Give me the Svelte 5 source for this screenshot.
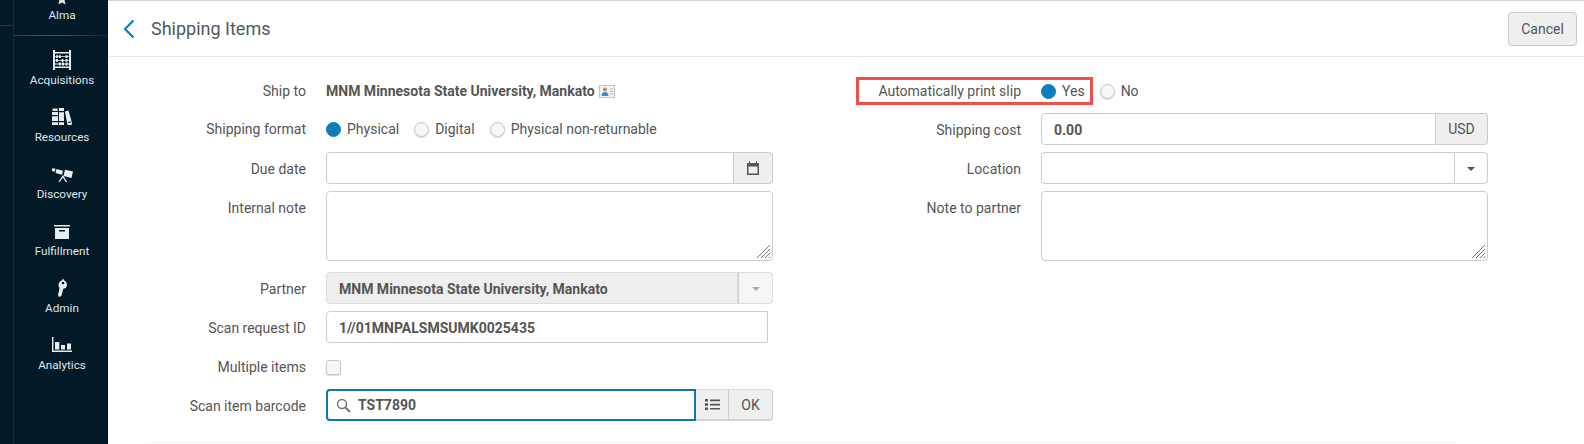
<script lang="ts">
  const navItems = [
    { label: 'Acquisitions', icon: 'abacus' },
    { label: 'Resources', icon: 'books' },
    { label: 'Discovery', icon: 'scope' },
    { label: 'Fulfillment', icon: 'box' },
    { label: 'Admin', icon: 'key' },
    { label: 'Analytics', icon: 'chart' }
  ];
</script>

<div class="page">
  <aside class="sidebar">
    <div class="rail"><span class="rail-tick"></span></div>
    <nav class="nav">
      <div class="alma">
        <svg class="star" width="12" height="6" viewBox="0 0 12 6"><path d="M3.500 0h5L9.600 4.600 6 2.600 2.400 4.600z" fill="#dfe6ea" /></svg>
        <span>Alma</span>
      </div>
      <div class="nav-sep"></div>
      {#each navItems as item (item.label)}
        <div class="nav-item">
          <svg width="24" height="22" viewBox="0 0 24 22" fill="#e8edf0">
            {#if item.icon === 'abacus'}
              <path d="M3 1h2v20H3zM19 1h2v20h-2zM5 3h14v1.500H5zM5 17.500h14V19H5z" />
              <path d="M5 7.300h14v.8H5zM5 11h14v.8H5zM5 14.600h14v.8H5z" />
              <path d="M6 6.300h2v2.800H6zM8.800 6.300h2v2.800h-2zM15.500 6.300h2v2.800h-2zM6 10h2v2.800H6zM11.500 10h2v2.800h-2zM15.500 10h2v2.800h-2zM8.800 13.600h2v2.800h-2zM12 13.600h2v2.800h-2zM15.500 13.600h2v2.800h-2z" />
            {:else if item.icon === 'books'}
              <path d="M2 6h6v13H2zM2.500 2.500h5V5h-5zM9 2h5v17H9z" />
              <path d="m15 5.500 3.500-1L22 17l-.5 2h-4z" />
              <path d="M2 9h6v1.200H2zM2 15h6v1.200H2zM9 5h5v1.200H9zM9 15h5v1.200H9zM18 16l3-.8.300 1-3 .8z" fill="#021a28" />
            {:else if item.icon === 'scope'}
              <path d="m2.500 5 3 .8-.8 3-3-.8zM6.500 6l6.500 1.700-1 4L5.500 10zM15 6.800l8 1.700-1.500 6.500-8-2z" />
              <path d="M12.500 12.500 8.500 19h1.300l3-4.500 3 4.500h1.400l-4-6.500z" />
            {:else if item.icon === 'box'}
              <path d="M4 5h16v1.600H4zM5 8h14v10.500a.5.5 0 0 1-.5.500h-13a.5.5 0 0 1-.5-.5z" />
              <path d="M9 10h6v1.500H9z" fill="#021a28" />
            {:else if item.icon === 'key'}
              <path d="M13 1.500 14 3.200A5 5 0 0 1 15.800 11L13.300 11.800 11.300 19 9 20 8 18 9.500 11A5 5 0 0 1 12 3.200z" />
              <circle cx="13" cy="6" r="1.300" fill="#021a28" />
            {:else}
              <path d="M2 3h1.400v13.600H22V18H2z" />
              <path d="M5 8h4.300v7.500H5zM11 11h4v4.500h-4zM17 9.500h4v6h-4z" />
            {/if}
          </svg>
          <span>{item.label}</span>
        </div>
      {/each}
    </nav>
  </aside>

  <main class="main">
    <header class="header">
      <svg class="back" width="14" height="20" viewBox="0 0 14 20"><path d="M11.500 1.500 3 10l8.500 8.500" fill="none" stroke="#0f7dbd" stroke-width="2.200" /></svg>
      <h1>Shipping Items</h1>
      <button class="cancel">Cancel</button>
    </header>

    <div class="form">
      <section class="col col-left">
        <div class="row short first">
          <span class="label">Ship to</span>
          <div class="value">
            <strong>MNM Minnesota State University, Mankato</strong>
            <svg class="card" width="16" height="13" viewBox="0 0 16 13">
              <rect x=".5" y=".5" width="15" height="12" fill="#f3f3f3" stroke="#c4c4c4" />
              <circle cx="6" cy="4.500" r="2" fill="#b08a6a" />
              <path d="M2.500 11c0-3 1.500-4 3.500-4s3.500 1 3.500 4z" fill="#3d8ccc" />
              <path d="M11 4h3M11 6.500h3M11 9h3" stroke="#b5b5b5" />
            </svg>
          </div>
        </div>
        <div class="row short">
          <span class="label">Shipping format</span>
          <div class="radios">
            <label class="radio"><span class="dot on"></span>Physical</label>
            <label class="radio"><span class="dot"></span>Digital</label>
            <label class="radio"><span class="dot"></span>Physical non-returnable</label>
          </div>
        </div>
        <div class="row">
          <span class="label">Due date</span>
          <div class="group">
            <div class="field"></div>
            <div class="addon cal">
              <svg width="14" height="14" viewBox="0 0 14 14" fill="#555"><path d="M1 2h2V0h1v2h6V0h1v2h2v12H1zM2.500 5.500v7h9v-7z" /></svg>
            </div>
          </div>
        </div>
        <div class="row top note">
          <span class="label">Internal note</span>
          <div class="area">
            <svg class="grip" width="15" height="15" viewBox="0 0 15 15"><path d="M1 14 14 1M5 14l9-9M9 14l5-5M12.500 14l1.500-1.500" stroke="#777" stroke-width="1" /></svg>
          </div>
        </div>
        <div class="row">
          <span class="label">Partner</span>
          <div class="group disabled">
            <div class="field bold">MNM Minnesota State University, Mankato</div>
            <div class="addon caret-box"><span class="caret light"></span></div>
          </div>
        </div>
        <div class="row">
          <span class="label">Scan request ID</span>
          <div class="field bold solo">1//01MNPALSMSUMK0025435</div>
        </div>
        <div class="row short first">
          <span class="label">Multiple items</span>
          <span class="check"></span>
        </div>
        <div class="row">
          <span class="label">Scan item barcode</span>
          <div class="group scan">
            <div class="field bold focus">
              <svg width="15" height="15" viewBox="0 0 15 15" fill="none" stroke="#777"><circle cx="6" cy="6" r="4.500" stroke-width="1.500" /><path d="m9.500 9.500 4.500 4.500" stroke-width="2.200" /></svg>
              TST7890
            </div>
            <div class="addon btn list">
              <svg width="15" height="11" viewBox="0 0 15 11" fill="#555"><path d="M0 0h3v2.500H0zM5 .5h10v1.700H5zM0 4.200h3v2.500H0zM5 4.700h10v1.700H5zM0 8.400h3v2.500H0zM5 8.900h10v1.700H5z" /></svg>
            </div>
            <div class="addon btn ok">OK</div>
          </div>
        </div>
      </section>

      <section class="col col-right">
        <div class="row short first">
          <span class="label">Automatically print slip</span>
          <div class="radios narrow">
            <label class="radio"><span class="dot on"></span>Yes</label>
            <label class="radio"><span class="dot"></span>No</label>
          </div>
          <span class="callout"></span>
        </div>
        <div class="row">
          <span class="label">Shipping cost</span>
          <div class="group">
            <div class="field bold">0.00</div>
            <div class="addon usd">USD</div>
          </div>
        </div>
        <div class="row">
          <span class="label">Location</span>
          <div class="group">
            <div class="field"></div>
            <div class="addon caret-box plain"><span class="caret"></span></div>
          </div>
        </div>
        <div class="row top note">
          <span class="label">Note to partner</span>
          <div class="area">
            <svg class="grip" width="15" height="15" viewBox="0 0 15 15"><path d="M1 14 14 1M5 14l9-9M9 14l5-5M12.500 14l1.500-1.500" stroke="#777" stroke-width="1" /></svg>
          </div>
        </div>
      </section>
    </div>
    <div class="foot-line"></div>
  </main>
</div>

<style>
  :global(body) {
    margin: 0;
    background: #fff;
    font-family: Roboto, "Liberation Sans", sans-serif;
    font-size: 14px;
    color: #555;
  }

  .page {
    display: flex;
    height: 444px;
    overflow: hidden;
  }

  .sidebar {
    display: flex;
    width: 108px;
    flex: none;
    background: #021a28;
  }

  .rail {
    width: 13px;
    flex: none;
    border-right: 1px solid #10303f;
    padding-top: 25px;
  }

  .rail-tick {
    display: block;
    height: 1px;
    background: #1c3a49;
  }

  .nav {
    flex: 1;
    color: #dfe6ea;
    font-size: 11.7px;
    line-height: 14px;
    text-align: center;
  }

  .alma {
    display: flex;
    flex-direction: column;
    align-items: center;
    height: 35px;
    gap: 2px;
    padding-left: 2px;
    box-sizing: border-box;
  }

  .nav-sep {
    height: 1px;
    margin-bottom: 13px;
    background: linear-gradient(90deg, #2b4653, #3e5965 50%, #0a2431);
  }

  .nav-item {
    display: flex;
    flex-direction: column;
    align-items: center;
    gap: 2px;
    height: 57px;
    padding-left: 2px;
    box-sizing: border-box;
  }

  .main {
    flex: 1;
    min-width: 0;
    border-top: 1px solid #d4d4d4;
  }

  .header {
    display: flex;
    align-items: center;
    height: 55px;
    border-bottom: 1px solid #e4e4e4;
    padding: 0 7px 0 14px;
  }

  .back {
    margin-right: 15px;
  }

  h1 {
    flex: 1;
    margin: 0;
    font-size: 18px;
    font-weight: 400;
    color: #505a62;
  }

  .cancel {
    width: 69px;
    height: 34px;
    border: 1px solid #c8c8c8;
    border-radius: 4px;
    background: #efefef;
    color: #555;
    font: 14px Roboto, sans-serif;
    padding: 0;
  }

  .form {
    display: flex;
    padding-top: 17px;
  }

  .col {
    flex: none;
  }

  .col-left {
    width: 665px;
    --label: 198px;
  }

  .col-right {
    width: 662px;
    margin-left: 70px;
    --label: 178px;
  }

  .row {
    position: relative;
    display: flex;
    align-items: center;
    gap: 20px;
    height: 32px;
    margin-bottom: 7px;
    box-sizing: border-box;
  }

  .row.first {
    padding-top: 2px;
  }

  .row.top {
    align-items: flex-start;
  }

  .row.note {
    height: 70px;
    margin-bottom: 11px;
  }

  .row.note .label {
    padding-top: 9px;
  }

  .row:not(.short):not(.note) .label {
    padding-top: 2px;
  }

  .label {
    width: var(--label);
    flex: none;
    text-align: right;
    line-height: 16px;
  }

  .value {
    display: flex;
    align-items: center;
    gap: 4px;
  }

  .value strong {
    font-weight: 700;
    color: #555;
    font-size: 14px;
  }

  .radios {
    display: flex;
    gap: 15px;
  }

  .radio {
    display: flex;
    align-items: center;
    gap: 6px;
  }

  .dot {
    width: 15px;
    height: 15px;
    border-radius: 50%;
    border: 1px solid #c6c6c6;
    background: #f7f7f7;
    box-shadow: 0 1px 1px #ddd;
    box-sizing: border-box;
  }

  .dot.on {
    border-color: #0f7dbd;
    background: #0f7dbd;
    box-shadow: none;
  }

  .group {
    display: flex;
    width: 447px;
    height: 32px;
    box-sizing: border-box;
  }

  .field {
    flex: 1;
    display: flex;
    align-items: center;
    gap: 7px;
    min-width: 0;
    height: 32px;
    box-sizing: border-box;
    padding: 0 12px;
    border: 1px solid #ccc;
    border-radius: 4px 0 0 4px;
    background: #fff;
  }

  .bold {
    font-weight: 700;
    color: #555;
    padding-top: 1px;
  }

  .addon {
    display: flex;
    align-items: center;
    justify-content: center;
    flex: none;
    box-sizing: border-box;
    height: 32px;
    border: 1px solid #ccc;
    border-left: 0;
    background: #efefef;
    border-radius: 0 4px 4px 0;
  }

  .cal {
    width: 39px;
  }

  .usd {
    width: 52px;
  }

  .caret-box {
    width: 33px;
  }

  .disabled .caret-box {
    width: 35px;
  }

  .caret-box.plain {
    background: #fff;
  }

  .caret {
    width: 0;
    height: 0;
    margin-top: 2px;
    border: 4px solid transparent;
    border-top-color: #555;
    border-bottom: 0;
  }

  .caret.light {
    border-top-color: #aaa;
  }

  .disabled .field {
    background: #eee;
    border-color: #ddd;
  }

  .disabled .addon {
    background: #f6f6f6;
    border-color: #ddd;
    border-left: 1px solid #ccc;
  }

  .solo {
    flex: none;
    width: 442px;
    border-radius: 4px 0 0 4px;
  }

  .check {
    width: 15px;
    height: 15px;
    border: 1px solid #c6c6c6;
    border-radius: 3px;
    background: #f7f7f7;
    box-shadow: 0 1px 1px #ddd;
    box-sizing: border-box;
  }

  .focus {
    border: 2px solid #0b7aa5;
    border-radius: 4px 0 0 4px;
    padding: 0 12px 0 8px;
  }

  .btn {
    border-bottom: 2px solid #d4d4d4;
    border-top: 1px solid #d8d8d8;
  }

  .list {
    width: 33px;
    border-radius: 0;
    border-right: 1px solid #d0d0d0;
  }

  .ok {
    width: 44px;
  }

  .area {
    position: relative;
    width: 447px;
    height: 70px;
    box-sizing: border-box;
    border: 1px solid #ccc;
    border-radius: 4px;
  }

  .grip {
    position: absolute;
    right: 1px;
    bottom: 1px;
  }

  .callout {
    position: absolute;
    left: 13px;
    top: 3px;
    width: 237px;
    height: 28px;
    box-sizing: border-box;
    border: 3px solid #ef4f4b;
    pointer-events: none;
  }

  .foot-line {
    width: 1310px;
    height: 1px;
    margin: 14px 0 0 40px;
    background: #f2f2f2;
  }
</style>
